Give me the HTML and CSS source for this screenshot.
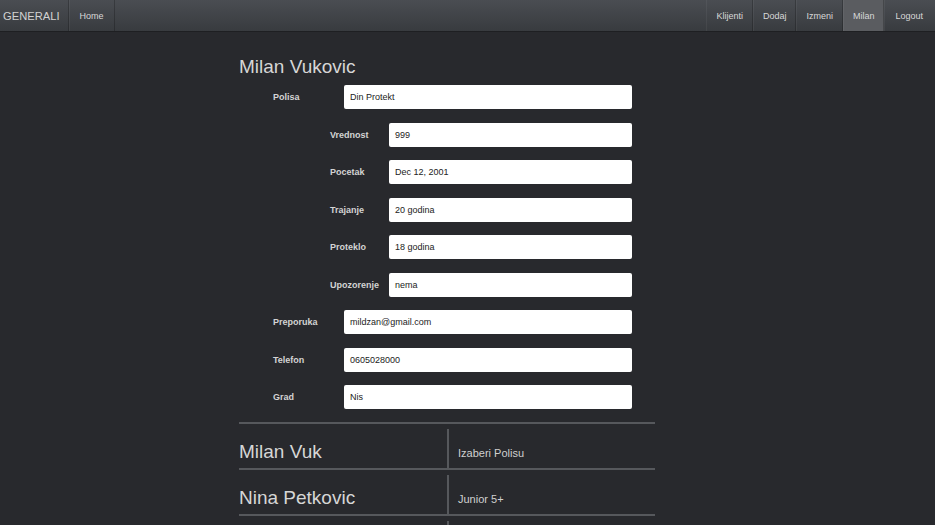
FILE: index.html
```html
<!DOCTYPE html>
<html>
<head>
<meta charset="utf-8">
<link rel="stylesheet" href="styles.css">
</head>
<body>
<nav class="navbar">
  <div class="nav-left">
    <span class="brand">GENERALI</span>
    <a class="nav-item">Home</a>
  </div>
  <div class="nav-right">
    <a class="nav-item">Klijenti</a>
    <a class="nav-item">Dodaj</a>
    <a class="nav-item">Izmeni</a>
    <a class="nav-item active">Milan</a>
    <a class="nav-item">Logout</a>
  </div>
</nav>
<main class="container">
  <h2 class="title">Milan Vukovic</h2>
  <div class="form">
    <div class="row"><label>Polisa</label><div class="input">Din Protekt</div></div>
    <div class="sub">
      <div class="row"><label>Vrednost</label><div class="input">999</div></div>
      <div class="row"><label>Pocetak</label><div class="input">Dec 12, 2001</div></div>
      <div class="row"><label>Trajanje</label><div class="input">20 godina</div></div>
      <div class="row"><label>Proteklo</label><div class="input">18 godina</div></div>
      <div class="row"><label>Upozorenje</label><div class="input">nema</div></div>
    </div>
    <div class="row"><label>Preporuka</label><div class="input">mildzan@gmail.com</div></div>
    <div class="row"><label>Telefon</label><div class="input">0605028000</div></div>
    <div class="row"><label>Grad</label><div class="input">Nis</div></div>
  </div>
  <div class="list">
    <div class="item"><div class="name">Milan Vuk</div><div class="policy">Izaberi Polisu</div></div>
    <div class="item"><div class="name">Nina Petkovic</div><div class="policy">Junior 5+</div></div>
    <div class="item"><div class="name">&nbsp;</div><div class="policy">&nbsp;</div></div>
  </div>
</main>
</body>
</html>
```

FILE: styles.css
```css
html, body {
  margin: 0;
  padding: 0;
  background: #28292d;
  font-family: "Liberation Sans", Arial, sans-serif;
  color: #c8c8c8;
  height: 525px;
  overflow: hidden;
}

.navbar {
  height: 31px;
  display: flex;
  justify-content: space-between;
  background: linear-gradient(#4a4d52, #383b3f);
  border-bottom: 1px solid #1e1f22;
}

.nav-left, .nav-right {
  display: flex;
  align-items: stretch;
}

.brand {
  display: flex;
  align-items: center;
  padding: 0 8px 0 3px;
  font-size: 11.2px;
  color: #d2d2d2;
  border-right: 1px solid rgba(0, 0, 0, 0.22);
}

.nav-item {
  display: flex;
  align-items: center;
  padding: 0 10px;
  font-size: 9px;
  color: #d8d8d8;
  border-left: 1px solid rgba(255, 255, 255, 0.05);
  border-right: 1px solid rgba(0, 0, 0, 0.22);
}

.nav-right .nav-item {
  padding: 0 9px;
}

.nav-right .nav-item:last-child {
  padding: 0 12px 0 10px;
  border-right: none;
}

.nav-item.active {
  background: #5a5c60;
}

.container {
  width: 416px;
  margin: 0 auto 0 239px;
}

.title {
  margin: 24px 0 0 0;
  font-size: 19px;
  font-weight: normal;
  line-height: 22px;
  color: #d6d6d6;
}

.form {
  padding-left: 34px;
  width: 359px;
  margin-top: 7px;
}

.row {
  display: flex;
  align-items: center;
  height: 24px;
  margin-bottom: 13.5px;
}

.row label {
  width: 71px;
  font-size: 9px;
  font-weight: bold;
  color: #d4d4d4;
}

.sub {
  padding-left: 57px;
}

.sub .row label {
  width: 59px;
}

.input {
  flex: 1;
  height: 24px;
  box-sizing: border-box;
  background: #fff;
  border-radius: 2px;
  padding-left: 6px;
  display: flex;
  align-items: center;
  font-size: 9px;
  color: #222;
}

.list {
  margin-top: -1px;
  border-top: 2px solid #56585c;
}

.item {
  display: flex;
  height: 44px;
  border-bottom: 2px solid #56585c;
}

.name {
  width: 208px;
  font-size: 19px;
  color: #d6d6d6;
  padding-top: 17px;
  box-sizing: border-box;
}

.policy {
  flex: 1;
  margin-top: 5px;
  border-left: 2px solid #56585c;
  padding-left: 9px;
  padding-top: 18px;
  box-sizing: border-box;
  font-size: 11px;
  color: #d0d0d0;
}
```
